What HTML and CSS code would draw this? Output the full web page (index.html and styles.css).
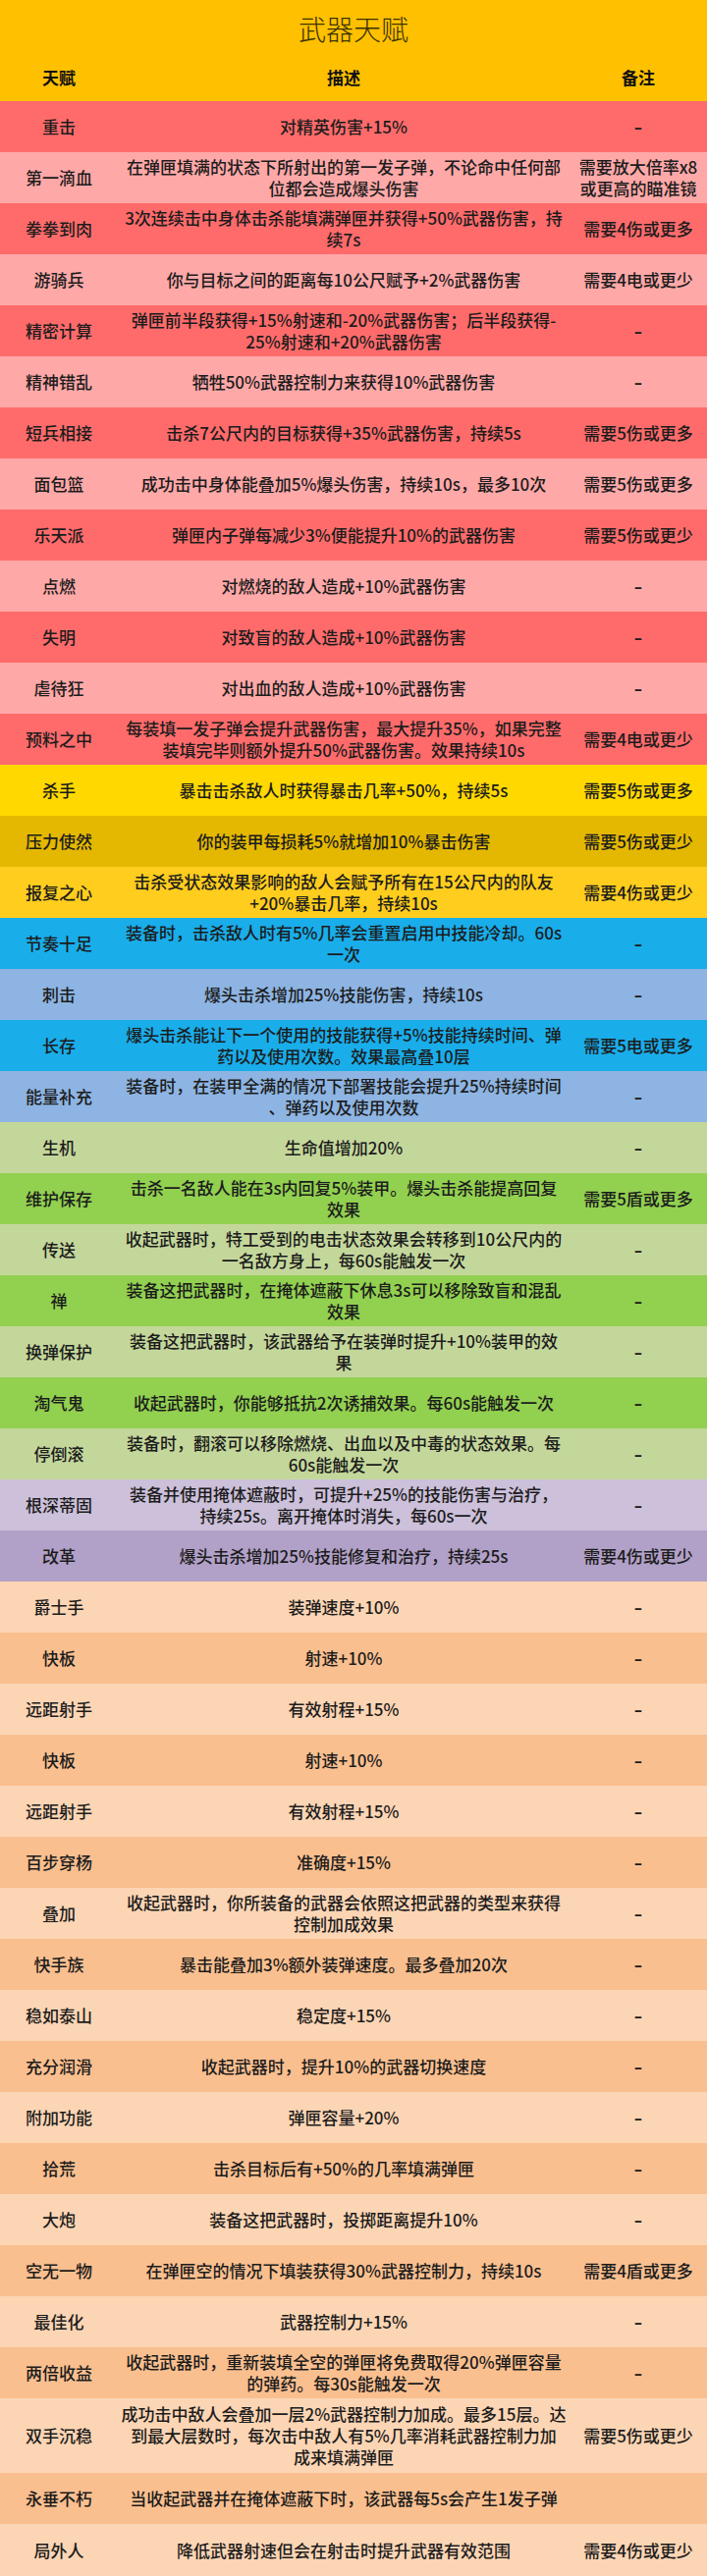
FILE: index.html
```html
<!DOCTYPE html>
<html lang="zh-CN">
<head>
<meta charset="utf-8">
<title>武器天赋</title>
<link rel="stylesheet" href="styles.css">
</head>
<body>
<div class="sheet">
  <div class="top">
    <div class="title">武器天赋</div>
    <div class="row head"><div>天赋</div><div>描述</div><div>备注</div></div>
  </div>

  <div class="row red-d"><div>重击</div><div>对精英伤害+15%</div><div class="dash">-</div></div>
  <div class="row red-l"><div>第一滴血</div><div>在弹匣填满的状态下所射出的第一发子弹，不论命中任何部<br>位都会造成爆头伤害</div><div>需要放大倍率x8<br>或更高的瞄准镜</div></div>
  <div class="row red-d"><div>拳拳到肉</div><div>3次连续击中身体击杀能填满弹匣并获得+50%武器伤害，持<br>续7s</div><div>需要4伤或更多</div></div>
  <div class="row red-l"><div>游骑兵</div><div>你与目标之间的距离每10公尺赋予+2%武器伤害</div><div>需要4电或更少</div></div>
  <div class="row red-d"><div>精密计算</div><div>弹匣前半段获得+15%射速和-20%武器伤害；后半段获得-<br>25%射速和+20%武器伤害</div><div class="dash">-</div></div>
  <div class="row red-l"><div>精神错乱</div><div>牺牲50%武器控制力来获得10%武器伤害</div><div class="dash">-</div></div>
  <div class="row red-d"><div>短兵相接</div><div>击杀7公尺内的目标获得+35%武器伤害，持续5s</div><div>需要5伤或更多</div></div>
  <div class="row red-l"><div>面包篮</div><div>成功击中身体能叠加5%爆头伤害，持续10s，最多10次</div><div>需要5伤或更多</div></div>
  <div class="row red-d"><div>乐天派</div><div>弹匣内子弹每减少3%便能提升10%的武器伤害</div><div>需要5伤或更少</div></div>
  <div class="row red-l"><div>点燃</div><div>对燃烧的敌人造成+10%武器伤害</div><div class="dash">-</div></div>
  <div class="row red-d"><div>失明</div><div>对致盲的敌人造成+10%武器伤害</div><div class="dash">-</div></div>
  <div class="row red-l"><div>虐待狂</div><div>对出血的敌人造成+10%武器伤害</div><div class="dash">-</div></div>
  <div class="row red-d"><div>预料之中</div><div>每装填一发子弹会提升武器伤害，最大提升35%，如果完整<br>装填完毕则额外提升50%武器伤害。效果持续10s</div><div>需要4电或更少</div></div>
  <div class="row yel-a"><div>杀手</div><div>暴击击杀敌人时获得暴击几率+50%，持续5s</div><div>需要5伤或更多</div></div>
  <div class="row yel-b"><div>压力使然</div><div>你的装甲每损耗5%就增加10%暴击伤害</div><div>需要5伤或更少</div></div>
  <div class="row yel-c"><div>报复之心</div><div>击杀受状态效果影响的敌人会赋予所有在15公尺内的队友<br>+20%暴击几率，持续10s</div><div>需要4伤或更少</div></div>
  <div class="row blu-d"><div>节奏十足</div><div>装备时，击杀敌人时有5%几率会重置启用中技能冷却。60s<br>一次</div><div class="dash">-</div></div>
  <div class="row blu-l"><div>刺击</div><div>爆头击杀增加25%技能伤害，持续10s</div><div class="dash">-</div></div>
  <div class="row blu-d"><div>长存</div><div>爆头击杀能让下一个使用的技能获得+5%技能持续时间、弹<br>药以及使用次数。效果最高叠10层</div><div>需要5电或更多</div></div>
  <div class="row blu-l"><div>能量补充</div><div>装备时，在装甲全满的情况下部署技能会提升25%持续时间<br>、弹药以及使用次数</div><div class="dash">-</div></div>
  <div class="row grn-l"><div>生机</div><div>生命值增加20%</div><div class="dash">-</div></div>
  <div class="row grn-d"><div>维护保存</div><div>击杀一名敌人能在3s内回复5%装甲。爆头击杀能提高回复<br>效果</div><div>需要5盾或更多</div></div>
  <div class="row grn-l"><div>传送</div><div>收起武器时，特工受到的电击状态效果会转移到10公尺内的<br>一名敌方身上，每60s能触发一次</div><div class="dash">-</div></div>
  <div class="row grn-d"><div>禅</div><div>装备这把武器时，在掩体遮蔽下休息3s可以移除致盲和混乱<br>效果</div><div class="dash">-</div></div>
  <div class="row grn-l"><div>换弹保护</div><div>装备这把武器时，该武器给予在装弹时提升+10%装甲的效<br>果</div><div class="dash">-</div></div>
  <div class="row grn-d"><div>淘气鬼</div><div>收起武器时，你能够抵抗2次诱捕效果。每60s能触发一次</div><div class="dash">-</div></div>
  <div class="row grn-l"><div>停倒滚</div><div>装备时，翻滚可以移除燃烧、出血以及中毒的状态效果。每<br>60s能触发一次</div><div class="dash">-</div></div>
  <div class="row pur-l"><div>根深蒂固</div><div>装备并使用掩体遮蔽时，可提升+25%的技能伤害与治疗，<br>持续25s。离开掩体时消失，每60s一次</div><div class="dash">-</div></div>
  <div class="row pur-d"><div>改革</div><div>爆头击杀增加25%技能修复和治疗，持续25s</div><div>需要4伤或更少</div></div>
  <div class="row org-l"><div>爵士手</div><div>装弹速度+10%</div><div class="dash">-</div></div>
  <div class="row org-d"><div>快板</div><div>射速+10%</div><div class="dash">-</div></div>
  <div class="row org-l"><div>远距射手</div><div>有效射程+15%</div><div class="dash">-</div></div>
  <div class="row org-d"><div>快板</div><div>射速+10%</div><div class="dash">-</div></div>
  <div class="row org-l"><div>远距射手</div><div>有效射程+15%</div><div class="dash">-</div></div>
  <div class="row org-d"><div>百步穿杨</div><div>准确度+15%</div><div class="dash">-</div></div>
  <div class="row org-l"><div>叠加</div><div>收起武器时，你所装备的武器会依照这把武器的类型来获得<br>控制加成效果</div><div class="dash">-</div></div>
  <div class="row org-d"><div>快手族</div><div>暴击能叠加3%额外装弹速度。最多叠加20次</div><div class="dash">-</div></div>
  <div class="row org-l"><div>稳如泰山</div><div>稳定度+15%</div><div class="dash">-</div></div>
  <div class="row org-d"><div>充分润滑</div><div>收起武器时，提升10%的武器切换速度</div><div class="dash">-</div></div>
  <div class="row org-l"><div>附加功能</div><div>弹匣容量+20%</div><div class="dash">-</div></div>
  <div class="row org-d"><div>拾荒</div><div>击杀目标后有+50%的几率填满弹匣</div><div class="dash">-</div></div>
  <div class="row org-l"><div>大炮</div><div>装备这把武器时，投掷距离提升10%</div><div class="dash">-</div></div>
  <div class="row org-d"><div>空无一物</div><div>在弹匣空的情况下填装获得30%武器控制力，持续10s</div><div>需要4盾或更多</div></div>
  <div class="row org-l"><div>最佳化</div><div>武器控制力+15%</div><div class="dash">-</div></div>
  <div class="row org-d"><div>两倍收益</div><div>收起武器时，重新装填全空的弹匣将免费取得20%弹匣容量<br>的弹药。每30s能触发一次</div><div class="dash">-</div></div>
  <div class="row org-l tall"><div>双手沉稳</div><div>成功击中敌人会叠加一层2%武器控制力加成。最多15层。达<br>到最大层数时，每次击中敌人有5%几率消耗武器控制力加<br>成来填满弹匣</div><div>需要5伤或更少</div></div>
  <div class="row org-d"><div>永垂不朽</div><div>当收起武器并在掩体遮蔽下时，该武器每5s会产生1发子弹</div><div></div></div>
  <div class="row org-l last"><div>局外人</div><div>降低武器射速但会在射击时提升武器有效范围</div><div>需要4伤或更少</div></div>
</div>
</body>
</html>
```
FILE: styles.css
```css
* { box-sizing: border-box; }
html, body { margin: 0; padding: 0; }
body {
  width: 720px;
  font-family: "Noto Sans CJK SC", "Noto Sans", sans-serif;
  color: #1c1c1c;
  background: #fcd5b4;
}
.sheet { width: 720px; }
.top { background: #ffc000; }
.title {
  height: 55px;
  display: flex;
  align-items: center;
  justify-content: center;
  font-size: 28px;
  font-weight: 300;
  color: #3a3206;
  padding-top: 2px;
}
.row {
  display: grid;
  grid-template-columns: 120px 1fr 140px;
  align-items: center;
  height: 52px;
  font-size: 17px;
  font-weight: 500;
  line-height: 22px;
  text-align: center;
}
.row > div { white-space: nowrap; }
.row > .dash { font-weight: 700; transform: scaleX(1.4); }
.row.head { height: 48px; font-weight: 700; color: #111; font-size: 17px; }
.row.tall { height: 76px; }
.row.last { height: 53px; }

.red-d { background: #ff6b6b; }
.red-l { background: #ffa8a8; }
.yel-a { background: #ffd800; }
.yel-b { background: #e4b800; }
.yel-c { background: #ffcd1e; }
.blu-d { background: #19adea; }
.blu-l { background: #8db4e2; }
.grn-l { background: #c4d79b; }
.grn-d { background: #92d050; }
.pur-l { background: #ccc0da; }
.pur-d { background: #b1a0c7; }
.org-l { background: #fcd5b4; }
.org-d { background: #fabf8f; }
```
